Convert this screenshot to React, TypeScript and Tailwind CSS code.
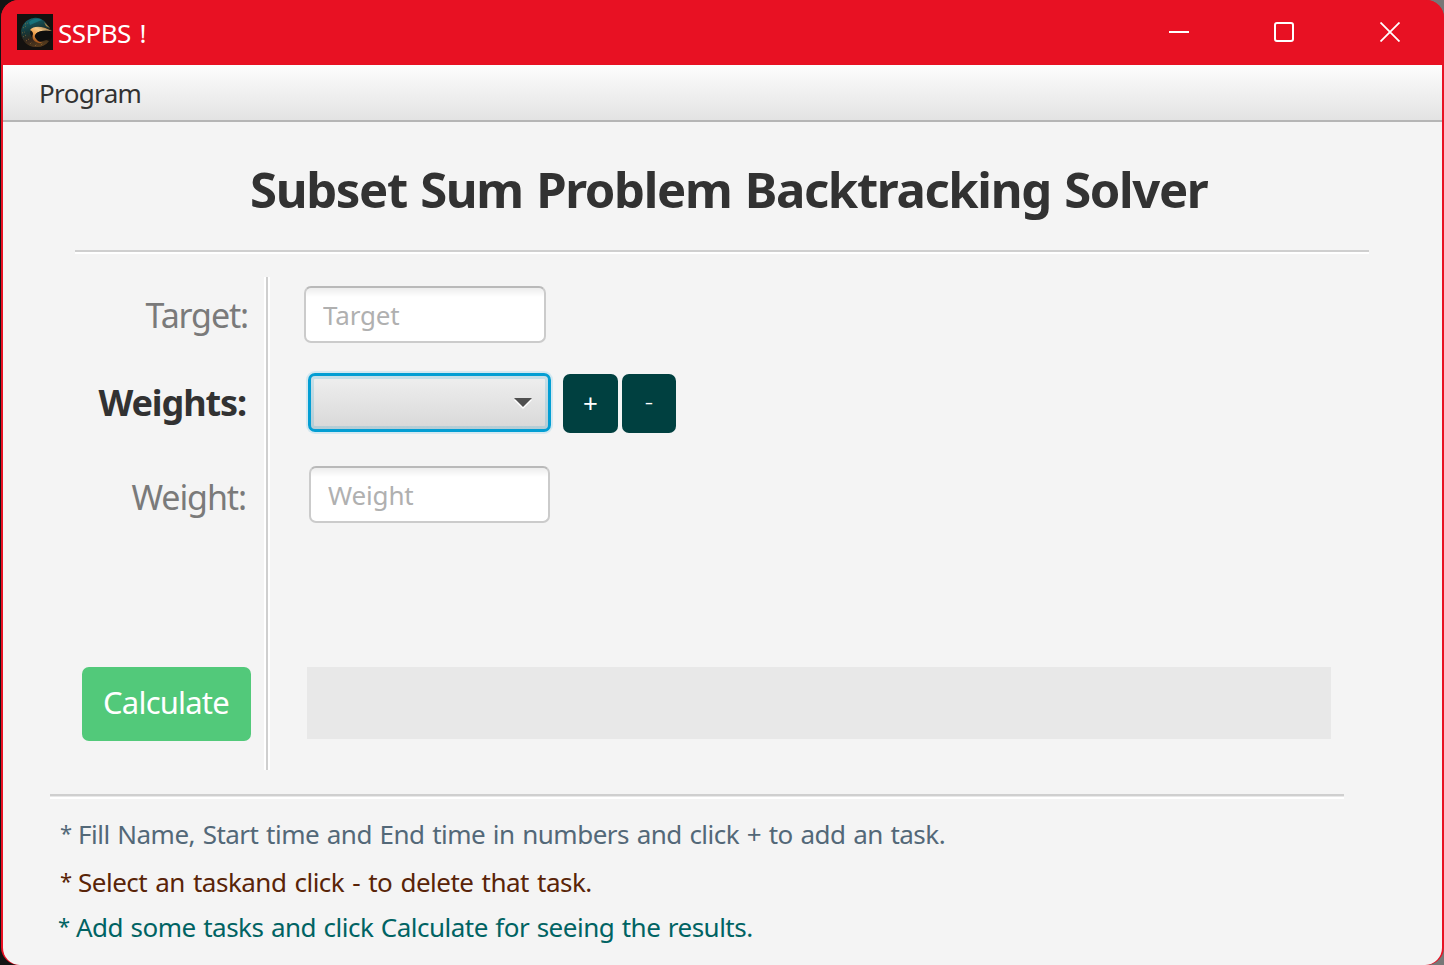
import React from "react";

function AppLogo() {
  return (
    <svg width="36" height="36" viewBox="0 0 36 36" className="block">
      <defs>
        <linearGradient id="ring" x1="0.3" y1="0" x2="0.6" y2="1">
          <stop offset="0" stopColor="#16646c" />
          <stop offset="0.4" stopColor="#14383a" />
          <stop offset="0.7" stopColor="#33261a" />
          <stop offset="1" stopColor="#5a3d1c" />
        </linearGradient>
        <linearGradient id="flame" x1="0.2" y1="1" x2="0.9" y2="0">
          <stop offset="0" stopColor="#8a3f10" />
          <stop offset="0.4" stopColor="#f0a04c" />
          <stop offset="0.65" stopColor="#f4c98a" />
          <stop offset="1" stopColor="#8a6a3a" />
        </linearGradient>
        <filter id="soft"><feGaussianBlur stdDeviation="0.6" /></filter>
      </defs>
      <rect width="36" height="36" fill="#14110f" />
      <g filter="url(#soft)">
        <path d="M31 12C28 6 22 3 17 4C9 5 4 11 4 19C5 28 12 34 20 33C25 33 29 31 32 27L29 26C22 28 14 26 13 19C14 13 22 10 34 16Z" fill="url(#ring)" />
        <path d="M12 8C16 4 22 4 25 6C21 7 18 9 13 11Z" fill="#12808a" opacity="0.7" />
        <path d="M27 8L33 14L29 12Z" fill="#b58a4a" />
        <path d="M13 16C17 11 26 12 35 17C27 15.500 21 17 19 20C18 24 21 28 26 29C18 30 14 25 16 20C16 18 15 17 13 16Z" fill="url(#flame)" />
        <path d="M18 21C20 17 27 16 35 18L34 26C28 25 24 29 21 27C19 25 17 23 18 21Z" fill="#0d0a0b" />
      </g>
      <path d="M6 14L9 12M5 19L8 18M6 23L9 21M9 27L12 25M13 30L15 28M18 32L20 30M24 31L26 29M8 10L11 9" stroke="#a97a3a" strokeWidth="1" strokeDasharray="1 1.5" opacity="0.7" />
    </svg>
  );
}

function TitleBar() {
  return (
    <header className="flex h-[65px] shrink-0 items-start bg-[#e81123] pl-[16px] pt-[14px] text-white">
      <AppLogo />
      <span className="ml-[5px] mt-[1px] text-[26px] leading-[36px] tracking-[-0.55px] [word-spacing:2.5px]">SSPBS !</span>
      <div className="ml-auto mr-[44px] mt-[8px] flex">
        <svg className="mr-[85px]" width="20" height="20" viewBox="0 0 20 20"><path d="M0 10H20" stroke="white" strokeWidth="2" /></svg>
        <svg className="mr-[86px]" width="20" height="20" viewBox="0 0 20 20"><rect x="1" y="1" width="18" height="18" rx="2" fill="none" stroke="white" strokeWidth="2" /></svg>
        <svg width="20" height="20" viewBox="0 0 20 20"><path d="M0.5 0.5L19.5 19.5M19.5 0.5L0.5 19.5" stroke="white" strokeWidth="1.8" /></svg>
      </div>
    </header>
  );
}

function Star() {
  return <span className="w-[18px] pt-[8px] text-[22px] leading-none tracking-normal">*</span>;
}

const field =
  "block h-[57px] rounded-[7px] border-2 border-[#cbcbcb] border-t-[#b9b9b9] bg-[linear-gradient(#ededed,#fff_9px)] px-[17px] text-[26px] leading-[53px] tracking-[-0.15px] text-[#333] outline-none placeholder:text-[#b0b0b0] placeholder:opacity-100";

export default function App() {
  return (
    <div className="h-[965px] w-[1444px] overflow-hidden bg-[linear-gradient(90deg,#141414_50%,#777_50%)] pl-px font-['Noto_Sans',sans-serif] text-[#323232]">
      <div className="flex h-full flex-col overflow-hidden rounded-[18px] bg-[#e81123]">
        <TitleBar />
        <div className="mx-[2px] flex min-h-0 flex-1 flex-col overflow-hidden rounded-b-[17px] bg-[#f4f4f4]">
          <nav className="h-[57px] shrink-0 border-b-2 border-[#b5b5b5] bg-[linear-gradient(#fdfdfd,#e3e3e3)] pl-[36px]">
            <button className="text-[26px] leading-[56px] tracking-[-0.65px]">Program</button>
          </nav>

          <h1 className="h-[128px] shrink-0 whitespace-nowrap pl-[247px] text-[49px] font-bold leading-[135px] tracking-[-1.35px] [word-spacing:2px]">
            Subset Sum Problem Backtracking Solver
          </h1>
          <div className="ml-[72px] h-[4px] w-[1294px] shrink-0 border-b-2 border-white bg-[#cfcfcf]" />

          <main className="mt-[23px] flex h-[493px] shrink-0">
            <div className="flex w-[261px] flex-col items-end whitespace-nowrap text-[34px] text-[#7a7a7a]">
              <label className="mr-[16px] mt-[13px] h-[50px] leading-[50px] tracking-[-1.15px]">Target:</label>
              <label className="mr-[18px] mt-[38px] h-[50px] text-[36px] font-bold leading-[50px] tracking-[-1.1px] text-[#323232]">Weights:</label>
              <label className="mr-[18px] mt-[44px] h-[50px] leading-[50px] tracking-[-1.1px]">Weight:</label>
              <button className="mr-[13px] mt-[145px] h-[74px] w-[169px] rounded-[7px] bg-[#52c97a] pb-[3px] pr-[1px] text-[31px] leading-[71px] tracking-[-0.8px] text-white">
                Calculate
              </button>
            </div>
            <div className="w-[6px] border-x-2 border-white bg-[#cfcfcf]" />
            <div className="flex flex-1 flex-col items-start">
              <input placeholder="Target" className={`${field} ml-[34px] mt-[9px] w-[242px]`} />
              <div className="ml-[38px] mt-[30px] flex items-start">
                <button className="flex h-[59px] w-[243px] items-center justify-end rounded-[7px] border-[3px] border-[#039ed3] bg-[linear-gradient(#efefef,#d8d8d8)] pr-[16px] pt-[2px] shadow-[0_0_0_2px_#d3e8f0,inset_0_0_0_3px_#0096c92b]">
                  <svg width="18" height="11" viewBox="0 0 18 11"><path d="M0 2H18L9 11Z" fill="white" /><path d="M0 0H18L9 9Z" fill="#505050" /></svg>
                </button>
                <button className="ml-[12px] mt-px h-[59px] w-[55px] rounded-[7px] bg-[#004040] text-[26px] leading-[59px] text-white">+</button>
                <button className="ml-[4px] mt-px h-[59px] w-[54px] rounded-[7px] bg-[#004040] pb-[4px] text-[26px] font-light leading-[55px] text-white">-</button>
              </div>
              <input placeholder="Weight" className={`${field} ml-[39px] mt-[33px] w-[241px]`} />
              <output className="ml-[37px] mt-[144px] block h-[72px] w-[1024px] bg-[#e8e8e8]" />
            </div>
          </main>

          <div className="ml-[47px] mt-[24px] h-[5px] w-[1294px] shrink-0 border-b-2 border-white bg-[linear-gradient(#cfcfcf_2px,#e8e8e8_2px)]" />
          <footer className="mt-[14px] whitespace-nowrap text-[26px]">
            <p className="ml-[57px] flex h-[48px] leading-[42px] tracking-[-0.5px] text-[#536878] [word-spacing:1.35px]">
              <Star />
              <span>Fill Name, Start time and End time in numbers and click + to add an task.</span>
            </p>
            <p className="ml-[57px] flex h-[45px] leading-[42px] tracking-[-0.5px] text-[#592408] [word-spacing:1.8px]">
              <Star />
              <span>Select an taskand click - to delete that task.</span>
            </p>
            <p className="ml-[55px] flex leading-[42px] tracking-[-0.5px] text-[#006363] [word-spacing:1.2px]">
              <Star />
              <span>Add some tasks and click Calculate for seeing the results.</span>
            </p>
          </footer>
        </div>
      </div>
    </div>
  );
}
